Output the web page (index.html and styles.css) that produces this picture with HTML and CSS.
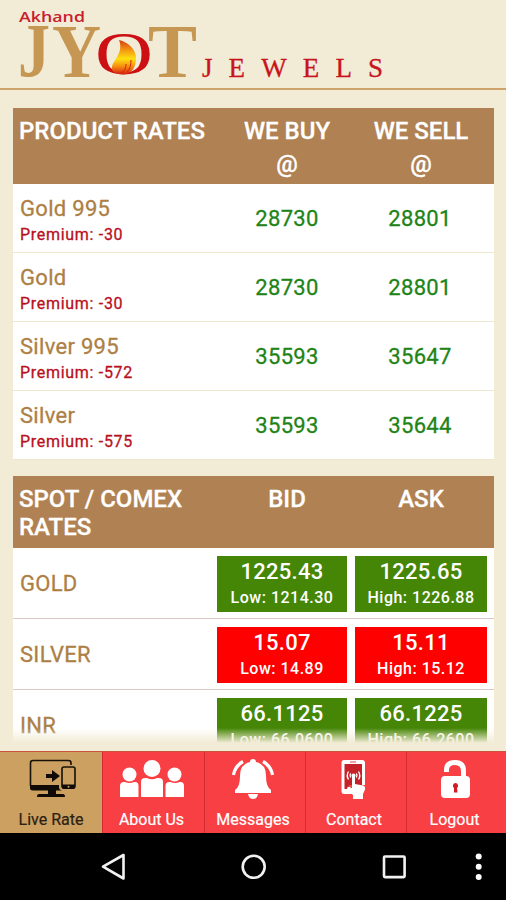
FILE: index.html
```html
<!DOCTYPE html>
<html lang="en">
<head>
  <meta charset="UTF-8" />
  <title>Akhand Jyot Jewels - Live Rate</title>
  <meta name="viewport" content="width=device-width, initial-scale=1.0" />
  <link rel="stylesheet" href="styles.css">
</head>
<body>

  <header class="header">
    <svg class="logo" width="400" height="88" viewBox="0 0 400 88">
      <defs>
        <linearGradient id="flame" x1="0" y1="0" x2="0" y2="1">
          <stop offset="0" stop-color="#d83a10" />
          <stop offset="0.25" stop-color="#f08a12" />
          <stop offset="0.55" stop-color="#ffe010" />
          <stop offset="0.78" stop-color="#f58a10" />
          <stop offset="1" stop-color="#d42010" />
        </linearGradient>
      </defs>
      <text class="logo-top" x="19" y="22" textLength="66" lengthAdjust="spacingAndGlyphs">Akhand</text>
      <text class="logo-big" x="18" y="76" textLength="32" lengthAdjust="spacingAndGlyphs">J</text>
      <text class="logo-big" x="52" y="77" textLength="49" lengthAdjust="spacingAndGlyphs">Y</text>
      <text class="logo-o" x="95" y="73.500" textLength="58" lengthAdjust="spacingAndGlyphs">O</text>
      <text class="logo-big" x="148" y="77" textLength="49" lengthAdjust="spacingAndGlyphs">T</text>
      <path fill="url(#flame)" d="M119 40c9 2 17 9 17 18 0 8-3 14-10 16-8 1-15-1-14-7 1-7 12-14 7-27z" />
      <path fill="none" stroke="#d42010" d="M121 73c4-2 5-5 5-9M127 72c3-3 4-7 4-12" />
      <text class="logo-jewels" x="202" y="77" textLength="181">JEWELS</text>
    </svg>
  </header>

  <main class="content">
    <section class="rates">
      <div class="rates-head">
        <h2>PRODUCT RATES</h2>
        <h2 class="buy">WE BUY<br>@</h2>
        <h2 class="sell">WE SELL<br>@</h2>
      </div>
      <div class="product">
        <div><p class="name">Gold 995</p><p class="premium">Premium: -30</p></div>
        <span class="price">28730</span><span class="price">28801</span>
      </div>
      <div class="product">
        <div><p class="name">Gold</p><p class="premium">Premium: -30</p></div>
        <span class="price">28730</span><span class="price">28801</span>
      </div>
      <div class="product">
        <div><p class="name">Silver 995</p><p class="premium">Premium: -572</p></div>
        <span class="price">35593</span><span class="price">35647</span>
      </div>
      <div class="product">
        <div><p class="name">Silver</p><p class="premium">Premium: -575</p></div>
        <span class="price">35593</span><span class="price">35644</span>
      </div>
    </section>

    <section class="rates">
      <div class="rates-head spot-head">
        <h2>SPOT / COMEX<br>RATES</h2>
        <h2>BID</h2>
        <h2>ASK</h2>
      </div>
      <div class="spot">
        <p class="name">GOLD</p>
        <div class="quote up"><b>1225.43</b><small>Low: 1214.30</small></div>
        <div class="quote up"><b>1225.65</b><small>High: 1226.88</small></div>
      </div>
      <div class="spot">
        <p class="name">SILVER</p>
        <div class="quote down"><b>15.07</b><small>Low: 14.89</small></div>
        <div class="quote down"><b>15.11</b><small>High: 15.12</small></div>
      </div>
      <div class="spot">
        <p class="name">INR</p>
        <div class="quote up"><b>66.1125</b><small>Low: 66.0600</small></div>
        <div class="quote up"><b>66.1225</b><small>High: 66.2600</small></div>
      </div>
    </section>
    <div class="fade"></div>
  </main>

  <nav class="tabs">
    <a class="tab active">
      <svg width="50" height="44" viewBox="0 0 50 44">
        <path fill="none" stroke="#171008" stroke-width="1.600" d="M45 9V7q0-2.500-2.500-2.500H7Q4.500 4.500 4.500 7v23" />
        <path fill="#100b06" d="M4 29h29v2q0 3 3 3.500H7Q4 34.500 4 32zM22 34h8v4h7q2 0 2 3H11q0-3 2-3h9zM20 18h6v-4l8 6-8 6v-4h-6z" />
        <rect x="36" y="11" width="13" height="21" rx="2" fill="none" stroke="#171008" stroke-width="1.600" />
        <path fill="#100b06" d="M36 28.500h13v3q0 1.500-2 1.500h-9q-2 0-2-1.500z" />
        <circle cx="42.500" cy="30.700" r="1" fill="#cca060" />
      </svg>
      <span>Live Rate</span>
    </a>
    <a class="tab">
      <svg width="66" height="44" viewBox="0 0 66 44" fill="#fff">
        <circle cx="33" cy="12.500" r="8.500" />
        <circle cx="10.500" cy="18.500" r="7" />
        <circle cx="55.500" cy="18.500" r="7" />
        <path d="M22 41V26q0-4 4-4h2q5 2.500 10 0h2q4 0 4 4v15zM1 41V30q0-4 4-4h1q4.500 2 9 0h1q3.500 0 3.500 4v11zM46.500 41V30q0-4 4-4h1q4.500 2 9 0h1q3.500 0 3.500 4v11z" />
      </svg>
      <span>About Us</span>
    </a>
    <a class="tab">
      <svg width="44" height="44" viewBox="0 0 44 44" fill="#fff">
        <path d="M22 3q3 0 3 3 10 2 10 14 0 11 5 14v3H4v-3q5-3 5-14Q9 8 19 6q0-3 3-3zM17 38h10q-1 5-5 5t-5-5z" />
        <path fill="none" stroke="#fff" stroke-width="3.200" d="M2.500 19Q4 10 12 5.500M41.500 19Q40 10 32 5.500" />
      </svg>
      <span>Messages</span>
    </a>
    <a class="tab">
      <svg width="44" height="44" viewBox="0 0 44 44">
        <path fill="#fff" fill-rule="evenodd" d="M12 4h18q3 0 3 3v22h-3V8H13v24h7v6h-8q-2.500 0-2.500-3V7q0-3 2.500-3z" />
        <path fill="#c62028" d="M12.500 8h17.500v21H17v4h-4.500z" />
        <path fill="#ee4048" d="M18 5.500h6v1h-6z" />
        <path fill="none" stroke="#fff" stroke-width="1.400" d="M16.500 15.500q-2.500 4 0 8M26.500 15.500q2.500 4 0 8M18.700 17.500q-1.500 2 0 4M24.300 17.500q1.500 2 0 4" />
        <circle cx="21.500" cy="19.500" r="2" fill="#fff" />
        <path fill="#fff" d="M20 20q1.500-2 3 0v8l8 1.500q2.500.5 2 4L31 38v5H21v-4l-6-6q0-3 3-2l2 2z" />
      </svg>
      <span>Contact</span>
    </a>
    <a class="tab">
      <svg width="44" height="44" viewBox="0 0 44 44">
        <path fill="none" stroke="#fff" stroke-width="5" d="M13.500 16v-2Q13.500 6.500 22 6.500T30.500 15v8" />
        <rect x="8" y="20" width="29" height="22" rx="4" fill="#fff" />
        <path fill="#d01c24" d="M22.500 27a2.800 2.800 0 0 1 1.500 5l.5 4.500h-3.500V32a2.800 2.800 0 0 1 1.500-5z" />
      </svg>
      <span>Logout</span>
    </a>
  </nav>

  <footer class="android">
    <svg width="506" height="67" viewBox="0 0 506 67" fill="none" stroke="#f2f2f2" stroke-width="2.600" stroke-linejoin="round">
      <path d="M123.500 22v23.500L103 33.700z" />
      <circle cx="253.700" cy="33.800" r="11" />
      <rect x="384" y="23.500" width="20.600" height="20.600" rx="1" />
      <g fill="#fff" stroke="none">
        <circle cx="478.700" cy="23.500" r="3" />
        <circle cx="478.700" cy="33.700" r="3" />
        <circle cx="478.700" cy="44" r="3" />
      </g>
    </svg>
  </footer>

</body>
</html>
```
FILE: styles.css
```css
* {
  box-sizing: border-box;
}

body {
  margin: 0;
  width: 506px;
  height: 900px;
  display: flex;
  flex-direction: column;
  overflow: hidden;
  font-family: Roboto, Arial, sans-serif;
  background: #f2ecd6;
}

h2, p {
  margin: 0;
}

.header {
  height: 90px;
  border-bottom: 2px solid #cfa36c;
}

.logo {
  display: block;
}

.logo-top {
  font: 600 15px "Open Sans", sans-serif;
  fill: #c8202c;
}

.logo-big {
  font: bold 76px "Liberation Serif", serif;
  fill: #c69653;
}

.logo-o {
  font: 61px "Liberation Serif", serif;
  fill: #cc1014;
}

.logo-jewels {
  font: 27px "Liberation Serif", serif;
  fill: #c8141c;
  stroke: #c8141c;
  stroke-width: 0.3px;
}

.content {
  position: relative;
  height: 661px;
  padding: 18px 12px 0 13px;
  overflow: hidden;
}

.rates {
  margin-bottom: 16px;
  background: #fff;
}

.rates-head {
  display: grid;
  grid-template-columns: 201px 134px 134px;
  height: 76px;
  padding: 7px 0 0 6px;
  background: #b08152;
  color: #fff;
}

.rates-head h2 {
  font-size: 24px;
  font-weight: 500;
  line-height: 33px;
  text-align: center;
  white-space: nowrap;
  -webkit-text-stroke: 0.3px;
}

.rates-head h2:first-child {
  text-align: left;
}

.spot-head {
  height: 72px;
  padding-top: 9px;
}

.spot-head h2 {
  line-height: 28px;
}

.product {
  display: grid;
  grid-template-columns: 200px 134px 132px;
  align-items: center;
  height: 69px;
  padding: 1px 0 0 7px;
  border-bottom: 1px solid #ece8d0;
}

.name {
  color: #ad7f45;
  font-size: 22px;
  line-height: 28px;
  letter-spacing: 0.3px;
  -webkit-text-stroke: 0.3px;
}

.product .name {
  padding-top: 4px;
}

.premium {
  color: #b8101c;
  font-size: 16px;
  line-height: 24px;
  letter-spacing: 0.7px;
  -webkit-text-stroke: 0.3px;
}

.price {
  color: #1f8417;
  font-size: 22px;
  letter-spacing: 0.3px;
  text-align: center;
  -webkit-text-stroke: 0.3px;
}

.spot {
  display: grid;
  grid-template-columns: 189px 130px 132px;
  column-gap: 8px;
  align-items: center;
  height: 71px;
  padding: 1px 0 0 7px;
  border-bottom: 1px solid #dcc8c6;
}

.spot .name {
  padding-top: 1px;
}

.quote {
  height: 56px;
  padding-top: 3px;
  color: #fff;
  text-align: center;
}

.quote b {
  display: block;
  font-size: 22px;
  font-weight: 500;
  line-height: 26px;
  letter-spacing: 0.3px;
}

.quote small {
  display: block;
  font-size: 16px;
  font-weight: 500;
  line-height: 26px;
  letter-spacing: 0.5px;
}

.up {
  background: #458607;
}

.down {
  background: #fe0000;
}

.fade {
  position: absolute;
  left: 0;
  right: 0;
  bottom: 0;
  height: 23px;
  background: linear-gradient(rgba(242, 236, 214, 0), #f2ecd6 65%);
}

.tabs {
  display: grid;
  grid-template-columns: 102px 102px 101px 101px 100px;
  height: 82px;
  border-top: 1px solid #c9563c;
}

.tab {
  display: flex;
  flex-direction: column;
  align-items: center;
  padding: 4px 4px 0 0;
  background: #f83f43;
  border-left: 1px solid #d22c31;
  color: #fff;
  font-size: 16px;
}

.tab span {
  margin-top: 10px;
  line-height: 19px;
  -webkit-text-stroke: 0.2px;
}

.active {
  padding-right: 0;
  background: #cca060;
  border-left: 0;
  color: #2c2114;
}

.android {
  height: 67px;
  background: #000;
}
```
